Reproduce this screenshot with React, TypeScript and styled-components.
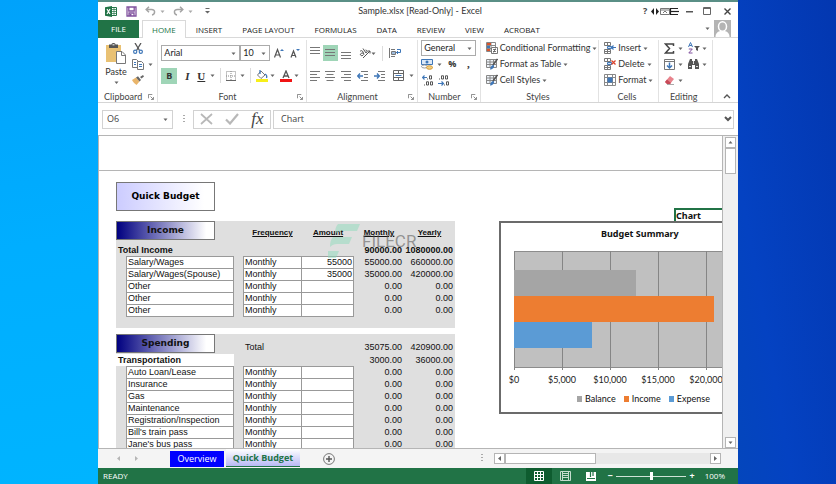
import React from "react";
import styled, { createGlobalStyle } from "styled-components";

const GREEN = "#217346";
const UI = '"Open Sans", "Noto Sans", sans-serif';
const RIBBON = 'Lato, "Open Sans", sans-serif';
const SHEET = '"Liberation Sans", Arial, sans-serif';

const GlobalStyle = createGlobalStyle`
  * { box-sizing: border-box; }
  body { margin: 0; overflow: hidden; }
  button, input, select { font: inherit; color: inherit; margin: 0; padding: 0; border: 0; border-radius: 0; background: none; }
  svg { display: block; flex: none; }
`;

/* ---------- desktop and window ---------- */

const Desktop = styled.div`
  display: grid;
  grid-template-columns: minmax(0, 98fr) minmax(0, 640fr) minmax(0, 98fr);
  height: 100vh;
  font: 9px/12px ${UI};
  color: #444;
`;
const Backdrop = styled.div<{ $side: "left" | "right" }>`
  background: ${(p) =>
    p.$side === "left"
      ? "linear-gradient(170deg, #00a2fb 0%, #00aeff 50%, #00b4ff 100%)"
      : "linear-gradient(80deg, #0446bc 0%, #0442c2 30%, #0337b0 100%)"};
`;
const Window = styled.main`
  display: flex;
  flex-direction: column;
  min-height: 0;
  min-width: 0;
  background: #fff;
  border-top: 2px solid #5a8f86;
`;
const Spacer = styled.div`
  flex: 1;
`;

const TitleBar = styled.header`
  display: flex;
  align-items: center;
  height: 18px;
  padding: 0 3px 0 7px;
`;
const TitleSide = styled.div<{ $end?: boolean }>`
  display: flex;
  align-items: center;
  flex: 1;
  gap: ${(p) => (p.$end ? 4 : 8)}px;
  justify-content: ${(p) => (p.$end ? "flex-end" : "flex-start")};
`;
const WindowTitle = styled.h1`
  margin: 0;
  font: 9px/12px ${RIBBON};
  color: #333;
`;
const IconButton = styled.button<{ $w?: number; $h?: number; $on?: boolean }>`
  display: flex;
  align-items: center;
  justify-content: center;
  flex: none;
  width: ${(p) => p.$w ?? 12}px;
  height: ${(p) => p.$h ?? 16}px;
  background: ${(p) => (p.$on ? "#9fd5b7" : "transparent")};
`;

/* ---------- ribbon tabs ---------- */

const TabStrip = styled.nav`
  display: flex;
  height: 18px;
  border-bottom: 1px solid #d9d9d9;
  font-size: 8px;
`;
const FileTab = styled.button`
  flex: none;
  width: 41px;
  height: 18px;
  margin-right: 3px;
  background: ${GREEN};
  color: #fff;
`;
const RibbonTab = styled.button<{ $active?: boolean }>`
  height: 18px;
  padding: 0 9px;
  white-space: nowrap;
  color: ${(p) => (p.$active ? GREEN : "#222")};
  background: ${(p) => (p.$active ? "#fff" : "transparent")};
  border: 1px solid ${(p) => (p.$active ? "#d9d9d9" : "transparent")};
  border-bottom: 0;
`;
const Account = styled.button`
  display: flex;
  align-items: center;
  gap: 4px;
  margin-right: 7px;
`;

/* ---------- ribbon ---------- */

const Ribbon = styled.section`
  display: flex;
  height: 65px;
  padding-top: 2px;
  border-bottom: 1px solid #d5d5d5;
  font-family: ${RIBBON};
  color: #333;
`;
const Group = styled.div<{ $w: number }>`
  display: flex;
  flex-direction: column;
  flex: ${(p) => p.$w} 1 0;
  min-width: 0;
  border-right: 1px solid #e2e2e2;
`;
const GroupBody = styled.div<{ $pad?: string }>`
  display: flex;
  flex-direction: column;
  flex: 1;
  padding: ${(p) => p.$pad ?? "0 0 0 5px"};
`;
const GroupFoot = styled.div`
  display: flex;
  align-items: center;
  height: 12px;
  padding: 2px 3px 0 0;
  color: #444;
`;
const GroupName = styled.span`
  flex: 1;
  text-align: center;
`;
const CollapseCorner = styled.div`
  display: flex;
  align-items: flex-end;
  justify-content: center;
  width: 25px;
  padding: 0 0 2px 4px;
`;
const Tools = styled.div<{ $gap?: number }>`
  display: flex;
  align-items: center;
  gap: ${(p) => p.$gap ?? 4}px;
  height: 16px;
`;
const ToolColumns = styled.div`
  display: flex;
  gap: 3px;
`;
const ToolColumn = styled.div`
  display: flex;
  flex-direction: column;
`;
const PasteButton = styled.button`
  display: flex;
  flex-direction: column;
  align-items: center;
  gap: 2px;
  width: 26px;
  padding-top: 3px;
`;
const Divider = styled.span`
  width: 1px;
  height: 15px;
  background: #dcdcdc;
`;
const TextTool = styled.button`
  display: flex;
  align-items: center;
  gap: 2px;
  height: 16px;
  white-space: nowrap;
`;
const SelectBox = styled.label<{ $w: number }>`
  position: relative;
  display: flex;
  flex: none;
  width: ${(p) => p.$w}px;
  height: 16px;
  border: 1px solid #ababab;
  select {
    appearance: none;
    width: 100%;
    padding-left: 2px;
    color: #222;
  }
  svg {
    position: absolute;
    right: 3px;
    top: 5px;
    pointer-events: none;
  }
`;
const Glyph = styled.span<{ $bold?: boolean; $italic?: boolean; $line?: boolean; $size?: number }>`
  font-family: "Liberation Serif", serif;
  font-size: ${(p) => p.$size ?? 11}px;
  font-weight: ${(p) => (p.$bold ? 700 : 400)};
  font-style: ${(p) => (p.$italic ? "italic" : "normal")};
  text-decoration: ${(p) => (p.$line ? "underline" : "none")};
`;
const Letter = styled.span`
  font-family: ${UI};
  font-size: 9px;
  font-weight: 700;
`;

/* ---------- formula bar ---------- */

const FormulaBar = styled.section`
  display: flex;
  align-items: center;
  height: 33px;
  padding: 0 4px;
  border-bottom: 1px solid #b5b5b5;
`;
const NameBox = styled.label`
  display: flex;
  align-items: center;
  width: 71px;
  height: 19px;
  padding: 0 4px;
  border: 1px solid #d2d2d2;
  input {
    flex: 1;
    min-width: 0;
  }
`;
const FormulaTools = styled.div`
  display: flex;
  align-items: center;
  justify-content: space-around;
  width: 78px;
  height: 19px;
  margin: 0 2px 0 8px;
  border: 1px solid #d2d2d2;
`;
const FormulaField = styled.label`
  display: flex;
  align-items: center;
  flex: 1;
  height: 19px;
  padding: 0 1px 0 7px;
  border: 1px solid #d2d2d2;
  input {
    flex: 1;
    min-width: 0;
  }
`;
const Grip = styled.span`
  width: 2px;
  height: 9px;
  margin-left: 10px;
  background: repeating-linear-gradient(#aaa 0 1px, transparent 1px 3px);
`;

/* ---------- sheet ---------- */

const Workspace = styled.section`
  display: flex;
  flex: 1;
  min-height: 0;
`;
const Grid = styled.div`
  flex: 1;
  min-width: 0;
  overflow: hidden;
  border-left: 1px solid #b5b5b5;
  border-right: 1px solid #b5b5b5;
  font: 9px/11px ${SHEET};
  color: #111;
`;
const FrozenPane = styled.div`
  height: 35px;
  border-bottom: 1px solid #b5b5b5;
`;
const SheetBody = styled.div`
  display: flex;
  gap: 44px;
  padding: 11px 0 0 17px;
`;
const BudgetSide = styled.div`
  position: relative;
  flex: none;
  width: 339px;
`;
const SheetTitle = styled.h2`
  width: 99px;
  height: 29px;
  margin: 0 0 10px;
  border: 1px solid #777;
  background: linear-gradient(90deg, #ccccff, #fff 90%);
  font: 700 9px/27px "DejaVu Sans", sans-serif;
  color: #000;
  text-align: center;
`;
const SectionTitle = styled.div`
  width: 99px;
  height: 19px;
  border: 1px solid #777;
  background: linear-gradient(90deg, #000080, #fff 92%);
  font: 700 9px/17px "DejaVu Sans", sans-serif;
  color: #111;
  text-align: center;
`;
const Budget = styled.table`
  width: 339px;
  margin-bottom: 6px;
  border-collapse: separate;
  border-spacing: 0;
  table-layout: fixed;
  background: #dfdfdf;
  td, th { padding: 0; height: 12px; white-space: nowrap; text-align: left; }
`;
const HeadRow = styled.tr<{ $h: number }>`
  height: ${(p) => p.$h}px;
  && > * {
    height: ${(p) => p.$h}px;
    vertical-align: top;
  }
`;
const HeadCell = styled.th`
  && {
    padding-top: 6px;
    font-size: 8px;
    text-align: center;
    text-decoration: underline;
  }
`;
const TotalCell = styled.td`
  && {
    padding: 8px 2px 0 2px;
    text-align: right;
  }
  &&:nth-of-type(2) { text-align: left; }
`;
const LabelCell = styled.th<{ $white?: boolean }>`
  && { padding-left: 2px; }
  background: ${(p) => (p.$white ? "#fff" : "transparent")};
`;
const Entry = styled.td<{ $right?: boolean; $first?: boolean }>`
  && {
    padding: 0 2px 0 1px;
    text-align: ${(p) => (p.$right ? "right" : "left")};
  }
  background: #fff;
  box-shadow: inset 0 1px #999, inset -1px 0 #999, 0 1px #999;
  border-left: ${(p) => (p.$first ? "1px solid #999" : "0")};
`;
const Num = styled.td<{ $bold?: boolean }>`
  && {
    padding-right: 2px;
    text-align: right;
  }
  font-weight: ${(p) => (p.$bold ? 700 : 400)};
`;
const Watermark = styled.div`
  position: absolute;
  left: 212px;
  top: 42px;
  display: flex;
  align-items: center;
  gap: 2px;
  font: 400 17px/34px Roboto, sans-serif;
  color: rgba(80, 80, 80, 0.55);
  pointer-events: none;
`;
const ChartSide = styled.div`
  display: flex;
  flex-direction: column;
  flex: 1;
  min-width: 0;
  padding-top: 26px;
`;
const ActiveCell = styled.div`
  align-self: flex-end;
  width: 48px;
  height: 13px;
  border: solid ${GREEN};
  border-width: 2px 0 0 2px;
  font: 700 9px/12px "Noto Sans", sans-serif;
`;
const ChartFrame = styled.figure`
  height: 193px;
  margin: 0;
  border: 2px solid #6b6b6b;
  border-right: 0;
  overflow: hidden;
  font: 9px/12px ${RIBBON};
`;
const ChartTitle = styled.figcaption`
  padding: 4px 0 5px 100px;
  font: 700 9px/14px "Noto Sans", sans-serif;
`;
const Legend = styled.div`
  display: flex;
  gap: 8px;
  padding: 5px 0 0 76px;
`;
const LegendItem = styled.span<{ $c: string }>`
  display: flex;
  align-items: center;
  gap: 3px;
  &::before {
    content: "";
    width: 5px;
    height: 6px;
    background: ${(p) => p.$c};
  }
`;

/* ---------- scroll bars, sheet tabs, status ---------- */

const VScroll = styled.div`
  display: flex;
  flex-direction: column;
  width: 15px;
  padding: 1px 2px 0;
  background: #f0f0f0;
`;
const ScrollButton = styled.button`
  display: flex;
  align-items: center;
  justify-content: center;
  flex: none;
  width: 11px;
  height: 11px;
  border: 1px solid #b5b5b5;
  background: #fff;
`;
const Thumb = styled.div<{ $w: number; $h: number }>`
  flex: none;
  width: ${(p) => p.$w}px;
  height: ${(p) => p.$h}px;
  border: 1px solid #b5b5b5;
  background: #fff;
`;
const SheetTabs = styled.nav`
  display: flex;
  align-items: center;
  height: 20px;
  padding-right: 17px;
  border-top: 1px solid #b5b5b5;
  background: #f4f4f4;
`;
const SheetNav = styled.div`
  display: flex;
  gap: 13px;
  width: 72px;
  padding-left: 18px;
`;
const SheetTab = styled.button<{ $active?: boolean }>`
  width: ${(p) => (p.$active ? 74 : 54)}px;
  height: ${(p) => (p.$active ? 18 : 16)}px;
  margin-right: 2px;
  align-self: ${(p) => (p.$active ? "flex-start" : "center")};
  border-bottom: ${(p) => (p.$active ? `1px solid ${GREEN}` : "0")};
  background: ${(p) => (p.$active ? "linear-gradient(#fff, #b9b9f5)" : "#0000ff")};
  color: ${(p) => (p.$active ? GREEN : "#fff")};
  font-weight: ${(p) => (p.$active ? 700 : 400)};
  white-space: nowrap;
`;
const HScroll = styled.div`
  display: flex;
  width: 227px;
  margin-left: 11px;
  background: #e8e8e8;
`;
const StatusBar = styled.footer`
  display: flex;
  align-items: center;
  height: 16px;
  padding: 0 13px 0 5px;
  background: ${GREEN};
  color: #fff;
  font-size: 8px;
`;
const ViewButton = styled.button<{ $active?: boolean }>`
  display: flex;
  align-items: center;
  justify-content: center;
  width: 26px;
  height: 16px;
  background: ${(p) => (p.$active ? "#0e5c2f" : "transparent")};
`;
const ZoomSlider = styled.input`
  appearance: none;
  width: 70px;
  height: 10px;
  && { background: linear-gradient(#cfe3d6, #cfe3d6) center / 100% 1px no-repeat; }
  &::-webkit-slider-thumb {
    appearance: none;
    width: 3px;
    height: 8px;
    background: #fff;
  }
`;
const ZoomValue = styled.span`
  width: 27px;
  text-align: right;
`;

/* ---------- icons ---------- */

type Dir = "down" | "up" | "left" | "right";
const TRI: Record<Dir, string> = {
  down: "M.5 1.500h4L2.500 4z",
  up: "M.5 3.500h4L2.500 1z",
  left: "M4 0v5L1 2.500z",
  right: "M1 0v5l3-2.500z",
};
const Caret = ({ dir = "down", color = "#666" }: { dir?: Dir; color?: string }) => (
  <svg width="5" height="5" viewBox="0 0 5 5"><path d={TRI[dir]} fill={color} /></svg>
);
const Launcher = () => (
  <svg width="6" height="6" viewBox="0 0 7 7" fill="none" stroke="#777">
    <path d="M.5 5V.5H5M3 3l3 3M6.500 3.500v3h-3" />
  </svg>
);
const ExcelLogo = () => (
  <svg width="12" height="11" viewBox="0 0 12 11">
    <path d="M6 1.500h5.500v8H6" fill="#fff" stroke={GREEN} />
    <path d="M7 3.500h4M7 5.500h4M7 7.500h4M9 2v7" stroke={GREEN} strokeWidth=".7" />
    <path d="M0 1.200 7 0v11L0 9.800z" fill={GREEN} />
    <path d="m2 3 3 5M5 3 2 8" stroke="#fff" strokeWidth="1.200" />
  </svg>
);
const SaveIcon = () => (
  <svg width="11" height="11" viewBox="0 0 11 11" fill="none" stroke="#80519e" strokeWidth="1.300">
    <path d="M1 1h9v9H1zM2.800 1v4h5.400V1M3 10V7h5v3" />
    <path d="M3.500 8h2v2h-2z" fill="#80519e" stroke="none" />
  </svg>
);
const UndoIcon = ({ redo }: { redo?: boolean }) => (
  <svg width="11" height="10" viewBox="0 0 11 10" fill="none" stroke="#a4a4a4" strokeWidth="1.500">
    {redo ? <path d="M7 .8 9.800 3.500 7 6.200M9.500 3.500H4.500C0 3.500 1 8.500 4 9" /> : <path d="M4 .8 1.200 3.500 4 6.200M1.500 3.500h5C11 3.500 10 8.500 7 9" />}
  </svg>
);
const QatMore = () => (
  <svg width="5" height="6" viewBox="0 0 5 6"><path d="M.5 0h4v1h-4zM0 3h5L2.500 5.500z" fill="#666" /></svg>
);
const RibbonDisplay = () => (
  <svg width="28" height="9" viewBox="0 0 28 9" fill="none" stroke="#333">
    <path d="M3 1v7L0 4.500zM5 1v7l3-3.500z" fill="#222" stroke="none" />
    <path d="M9.500 1.500h9v6h-9zM9.500 3h9M12 6l2-2 2 2" stroke="#777" />
    <path d="M27 1.500h-8M19.500 1v7M27 7.500h-8" stroke="#222" strokeWidth="1.200" />
    <path d="M20 4.500h8" stroke="#222" strokeWidth="1.200" />
  </svg>
);
const MinIcon = () => <svg width="7" height="8" viewBox="0 0 7 8"><path d="M0 4h7v1.500H0z" fill="#555" /></svg>;
const MaxIcon = () => (
  <svg width="8" height="8" viewBox="0 0 8 8" fill="none" stroke="#666"><path d="M.5.500h7v7h-7zM.5 1.500h7" /></svg>
);
const CloseIcon = () => (
  <svg width="7" height="7" viewBox="0 0 7 7" stroke="#444" strokeWidth="1.400"><path d="m.5.500 6 6M6.500.500l-6 6" /></svg>
);
const Avatar = () => (
  <svg width="17" height="17" viewBox="0 0 17 17">
    <path d="M0 0h17v17H0z" fill="#b4b4b4" />
    <path d="M1.500 17c0-4 2.500-5.500 5-6h4c2.500.5 5 2 5 6z" fill="#fff" />
    <ellipse cx="8.500" cy="6.500" rx="4" ry="4.800" fill="#b4b4b4" stroke="#fff" strokeWidth="1.500" />
  </svg>
);
const PasteIcon = () => (
  <svg width="20" height="21" viewBox="0 0 20 21">
    <path d="M0 2h15v17H0z" fill="#e9c173" />
    <path d="M3 1.500h2.500c0-2 4-2 4 0H12V5H3z" fill="#555" />
    <path d="M6.500 1.800h2" stroke="#fff" />
    <path d="M10.500 8.500h5.500l3.500 3.500v8.500h-9z" fill="#fff" stroke="#777" />
    <path d="M15.500 8.500v4h4" fill="none" stroke="#777" />
  </svg>
);
const CutIcon = () => (
  <svg width="10" height="11" viewBox="0 0 10 11" fill="none">
    <path d="m2 0 4.500 7.500M8 0 3.500 7.500" stroke="#555" strokeWidth="1.300" />
    <circle cx="2.200" cy="8.700" r="1.600" stroke="#3f77b8" strokeWidth="1.200" />
    <circle cx="7.800" cy="8.700" r="1.600" stroke="#3f77b8" strokeWidth="1.200" />
  </svg>
);
const CopyIcon = () => (
  <svg width="12" height="11" viewBox="0 0 12 11" fill="#fff" stroke="#777">
    <path d="M.5.500h4l2 2v6h-6z" />
    <path d="M5.500 2.500h4l2 2v6h-6z" />
    <path d="M2 3.500h2M2 5.500h2M7 5.500h3M7 7.500h3" stroke="#3f77b8" />
  </svg>
);
const BrushIcon = () => (
  <svg width="12" height="10" viewBox="0 0 12 10">
    <path d="m0 5 4-2.500 3.500 4L4.500 10C3 9 1 7 0 5z" fill="#e9b56b" />
    <path d="m4 2.500 2-1.300L9 5 7.500 6.500zM8 2l3-2 1 1.500-2.500 2z" fill="#666" />
  </svg>
);
const GrowFont = ({ shrink }: { shrink?: boolean }) => (
  <svg width="10" height="10" viewBox="0 0 10 10" fill="none">
    <path d={shrink ? "M1 9.500 3.500 3 6 9.500M2 7.500h3" : "M.5 9.500 3.500 1.500l3 8M1.500 7h4"} stroke="#555" strokeWidth="1.200" />
    <path d={shrink ? "M6 1h4L8 3z" : "M6 3h4L8 1z"} fill="#3f77b8" />
  </svg>
);
const BordersIcon = () => (
  <svg width="10" height="10" viewBox="0 0 10 10" fill="none" stroke="#888">
    <path d="M.5.500h9v9h-9zM5 0v10M0 5h10" strokeDasharray="1 1" />
    <path d="M0 9.500h10" stroke="#666" />
  </svg>
);
const FillIcon = () => (
  <svg width="12" height="12" viewBox="0 0 12 12">
    <path d="m5 1 4 4-4 3.500L1.500 5z" fill="#fff" stroke="#777" />
    <path d="M4 0v4M9 4c2 1 2 3 1.500 4" stroke="#3f77b8" strokeWidth="1.300" fill="none" />
    <path d="M0 9h12v3H0z" fill="#f7ef1a" />
  </svg>
);
const FontColorIcon = () => (
  <svg width="12" height="12" viewBox="0 0 12 12">
    <path d="M3 8 6 1l3 7M4 6h4" stroke="#555" strokeWidth="1.300" fill="none" />
    <path d="M0 9h12v3H0z" fill="#f01414" />
  </svg>
);
const LinesIcon = ({ rows, short = "center" }: { rows: number[]; short?: "left" | "center" | "right" | "none" }) => {
  const x = { left: 0, center: 1.5, right: 3, none: 0 }[short];
  const len = short === "none" ? 10 : 7;
  return (
    <svg width="10" height="12" viewBox="0 0 10 12" stroke="#777">
      {rows.map((y, i) => (i % 2 ? <path key={y} d={`M${x} ${y}.500h${len}`} /> : <path key={y} d={`M0 ${y}.500h10`} />))}
    </svg>
  );
};
const OrientIcon = () => (
  <svg width="12" height="11" viewBox="0 0 12 11" fill="none" stroke="#555">
    <path d="M4 10 11 3M11 5.500V3H8.500" />
    <path d="M1 3.500c1-1.500 2.500-1 3 .5l1 2.500M4 5c-2 0-3 1-2.500 2S4 8 4.500 6.500M4 .500l3 4.500c1.500-.5 1.500-3-.5-3" />
  </svg>
);
const IndentIcon = ({ out }: { out?: boolean }) => (
  <svg width="11" height="10" viewBox="0 0 11 10" fill="none">
    <path d="M4 .5h7M7 3.500h4M7 6.500h4M4 9.500h7" stroke="#777" />
    <path d={out ? "M6 5H1M3 2.500.7 5 3 7.500" : "M0 5h5M3 2.500 5.300 5 3 7.500"} stroke="#3f77b8" strokeWidth="1.400" />
  </svg>
);
const WrapIcon = () => (
  <svg width="12" height="12" viewBox="0 0 12 12" fill="none" stroke="#777">
    <path d="M.5 1v10M2 2.500h4M2 9.500h4M2.500 4.500h4v3h-4z" />
    <path d="M8 2.500h3.500v3H7M9 4 7.500 5.500 9 7M3 6h3" stroke="#3f77b8" />
  </svg>
);
const MergeIcon = () => (
  <svg width="11" height="11" viewBox="0 0 11 11" fill="none" stroke="#666">
    <path d="M.5.500h10v10H.5zM.5 3.500h10M.5 7.500h10M5.500 0v3M5.500 8v3" />
    <path d="M2.500 5.500h6" stroke="#3f77b8" />
  </svg>
);
const CurrencyIcon = () => (
  <svg width="12" height="11" viewBox="0 0 12 11">
    <path d="M.5.500h11v5H.5z" fill="#dce8f6" stroke="#3f77b8" />
    <circle cx="6" cy="3" r="1.500" fill="#3f77b8" />
    <ellipse cx="3.500" cy="7.500" rx="3" ry="1.500" fill="#fff" stroke="#999" />
    <ellipse cx="8.500" cy="8.500" rx="3" ry="1.800" fill="#f1cf83" stroke="#d79b35" />
  </svg>
);
const DecimalIcon = ({ less }: { less?: boolean }) => (
  <svg width="11" height="11" viewBox="0 0 11 11" fill="none" stroke="#444" strokeWidth=".9">
    <path d={less ? "M3.500.800h2v3.200h-2zM7.500.800h2v3.200h-2zM8.500 6.800h2V10h-2z" : "M7.500.800h2v3.200h-2zM4.500 6.800h2V10h-2zM8.500 6.800h2V10h-2z"} />
    <path d={less ? "M1.500 3.500v1M6.500 9.500v1" : "M5.500 3.500v1M2.500 9.500v1"} />
    <path d={less ? "M0 8.500h5M3.500 6.500l2 2-2 2" : "M5 2.500H1M2.500.500l-2 2 2 2"} stroke="#3f77b8" strokeWidth="1.200" />
  </svg>
);
const CondIcon = () => (
  <svg width="12" height="12" viewBox="0 0 12 12">
    <path d="M.5.500h9v9h-9zM.5 3.500h9M.5 6.500h9M5 0v9" fill="#fff" stroke="#888" />
    <path d="M1 1h4v2H1zM1 7h3v2H1z" fill="#d9532c" /><path d="M1 4h3v2H1z" fill="#3f77b8" />
    <path d="M5.500 5.500h6v6h-6z" fill="#fff" stroke="#777" /><path d="M7 7.500h3M7 9.500h3M9.500 6.500l-2 4" stroke="#555" strokeWidth=".8" />
  </svg>
);
const StyleIcon = () => (
  <svg width="12" height="12" viewBox="0 0 12 12">
    <path d="M.5 1.500h10v8H.5zM.5 4h10M.5 6.500h10M4 1.500v8M7.500 1.500v8" fill="#eef3f9" stroke="#888" />
    <path d="M11.500 1 7 7" stroke="#555" strokeWidth="1.500" />
    <path d="M4 11.500c.5-3 1.500-4.500 3.500-4.500 1.500 2-.5 4.500-3.500 4.500z" fill="#3f77b8" />
  </svg>
);
const CellsIcon = ({ kind }: { kind: "insert" | "delete" | "format" }) => (
  <svg width="12" height="12" viewBox="0 0 12 12" fill="none">
    {kind === "format" ? (
      <>
        <path d="M.5.500h11v11H.5zM.5 3.500h11M.5 8.500h11M3.500 0v12M8.500 0v12" stroke="#888" />
        <path d="M3.500 3.500h5v5h-5z" fill="#3f77b8" />
      </>
    ) : (
      <>
        <path d="M.5.500h6v3h-6zM3.500 0v4M.5 7.500h6v4h-6zM3.500 7.500v4M.5 9.500h6" stroke="#777" />
        <path d="M3.500 4.500h4v2h-4z" fill="#cfe0f3" stroke="#3f77b8" />
        {kind === "insert"
          ? <path d="M12 5.500H8M9.500 3.500l-2 2 2 2" stroke="#3f77b8" strokeWidth="1.200" />
          : <path d="m7.500 2.500 4 4M11.500 2.500l-4 4" stroke="#d9432c" strokeWidth="1.300" />}
      </>
    )}
  </svg>
);
const SigmaIcon = () => (
  <svg width="11" height="11" viewBox="0 0 11 11" fill="none" stroke="#444" strokeWidth="1.500"><path d="M9.500 3V1H1.500l4 4.500-4 4.500h8V8" /></svg>
);
const SortIcon = () => (
  <svg width="12" height="12" viewBox="0 0 12 12" fill="none">
    <path d="M.5 5 2.500.500 4.500 5M1.200 3.500h2.600" stroke="#3f77b8" />
    <path d="M.8 7h3.500L.8 11h3.700" stroke="#80519e" />
    <path d="M6 4h6L10 6v3L8 8V6z" fill="#555" />
  </svg>
);
const FillDownIcon = () => (
  <svg width="11" height="11" viewBox="0 0 11 11" fill="none">
    <path d="M.5.500h10v10H.5zM.5 2.500h10" stroke="#777" />
    <path d="M5.500 3.500V9M3 6.500 5.500 9 8 6.500" stroke="#3f77b8" strokeWidth="1.500" />
  </svg>
);
const FindIcon = () => (
  <svg width="11" height="10" viewBox="0 0 11 10"><path d="M2 0h2v2h3V0h2l2 5v5H7V6H4v4H0V5z" fill="#555" /><path d="M1 7.500h2M8 7.500h2M5.500 2v3" stroke="#fff" strokeWidth=".8" /></svg>
);
const EraserIcon = () => (
  <svg width="11" height="9" viewBox="0 0 11 9"><path d="m1 6 5-6 4 3-4 5H3z" fill="#e8838c" /><path d="m1 6 2-2.500L7 7l-1 1H3z" fill="#c74a58" /><path d="M3 8.500h7" stroke="#aaa" /></svg>
);
const Chevron = ({ up }: { up?: boolean }) => (
  <svg width="8" height="6" viewBox="0 0 8 6" fill="none" stroke="#555" strokeWidth={up ? 1.4 : 2}><path d={up ? "m1 5 3-3 3 3" : "m1 1 3 3 3-3"} /></svg>
);
const CancelIcon = () => (
  <svg width="13" height="12" viewBox="0 0 13 12" stroke="#b8b8b8" strokeWidth="1.700"><path d="m1 1 11 10M12 1 1 11" /></svg>
);
const CheckIcon = () => (
  <svg width="14" height="12" viewBox="0 0 14 12" fill="none" stroke="#b8b8b8" strokeWidth="2.200"><path d="m1 6.500 4 4L13 1" /></svg>
);
const AddSheetIcon = () => (
  <svg width="12" height="12" viewBox="0 0 12 12" fill="none" stroke="#777"><circle cx="6" cy="6" r="5.400" /><path d="M3 6h6M6 3v6" stroke="#555" strokeWidth="1.400" /></svg>
);
const NormalView = () => (
  <svg width="10" height="10" viewBox="0 0 10 10" fill="none" stroke="#fff"><path d="M.5.500h9v9h-9zM.5 3.500h9M.5 6.500h9M3.500.500v9M6.500.500v9" /></svg>
);
const PageView = () => (
  <svg width="11" height="10" viewBox="0 0 11 10" fill="none" stroke="#c4dccd"><path d="M.5.500h10v9H.5zM2.500 0v10M8.500 0v10M3 2.500h5M3 4.500h5M3 6.500h5" /></svg>
);
const BreakView = () => (
  <svg width="10" height="9" viewBox="0 0 10 9"><path d="M0 0h10v9H0z" fill="#fff" /><path d="M1 6.500h8M4.500 0v5M7 4V0" stroke={GREEN} strokeWidth="1.200" /></svg>
);
const WatermarkLogo = () => (
  <svg width="32" height="34" viewBox="0 0 32 34" fill="#8fdcbc" opacity=".5">
    <path d="M10 0h22l-3 7H14c-3 0-5 1-7 3 0-5 1-8 3-10zM5 13h19l-3 7H9c-3 0-5 1-7 3 0-5 1-8 3-10zM0 27h11l-3 7H0z" />
  </svg>
);

/* ---------- data ---------- */

type Row = { name: string; amount?: string; monthly: string; yearly: string };
const zero = (name: string): Row => ({ name, monthly: "0.00", yearly: "0.00" });
const INCOME: Row[] = [
  { name: "Salary/Wages", amount: "55000", monthly: "55000.00", yearly: "660000.00" },
  { name: "Salary/Wages(Spouse)", amount: "35000", monthly: "35000.00", yearly: "420000.00" },
  zero("Other"), zero("Other"), zero("Other"),
];
const SPENDING: Row[] = ["Auto Loan/Lease", "Insurance", "Gas", "Maintenance", "Registration/Inspection", "Bill's train pass", "Jane's bus pass"].map(zero);
const TABS = ["HOME", "INSERT", "PAGE LAYOUT", "FORMULAS", "DATA", "REVIEW", "VIEW", "ACROBAT"];
const BARS = [
  { name: "Balance", width: 122, y: 19, color: "#a5a5a5" },
  { name: "Income", width: 200, y: 45, color: "#ed7d31" },
  { name: "Expense", width: 78, y: 71, color: "#5b9bd5" },
];
const AXIS = ["$0", "$5,000", "$10,000", "$15,000", "$20,000"];

const Columns = () => (
  <colgroup>
    {[10, 108, 9, 59, 52, 50, 51].map((w, i) => <col key={i} width={w} />)}
  </colgroup>
);
const EntryRow = ({ row }: { row: Row }) => (
  <tr>
    <td />
    <Entry $first>{row.name}</Entry>
    <td />
    <Entry $first>Monthly</Entry>
    <Entry $right>{row.amount ?? ""}</Entry>
    <Num>{row.monthly}</Num>
    <Num>{row.yearly}</Num>
  </tr>
);

const Plot = () => (
  <svg width="222" height="142" viewBox="0 0 222 142">
    <path d="M13 5h209v116H13z" fill="#c0c0c0" />
    <path d="M13 5.500h209M13 121.500h209" stroke="#8c8c8c" />
    {AXIS.map((label, i) => (
      <path key={label} d={`M${13 + i * 48}.500 5v119`} stroke="#858585" />
    ))}
    {BARS.map((b) => <rect key={b.name} x="13" y={b.y + 5} width={b.width} height="26" fill={b.color} />)}
    {AXIS.map((label, i) => (
      <text key={label} x={13 + i * 48} y="137" fontSize="9" textAnchor="middle" fill="#222">{label}</text>
    ))}
  </svg>
);

const Tool = ({ label, children, ...rest }: { label: string; children: React.ReactNode; $w?: number; $h?: number; $on?: boolean }) => (
  <IconButton type="button" aria-label={label} {...rest}>{children}</IconButton>
);

const Foot = ({ name, launcher }: { name: string; launcher?: boolean }) => (
  <GroupFoot>
    <GroupName>{name}</GroupName>
    {launcher && <Launcher />}
  </GroupFoot>
);

export default function App() {
  return (
    <Desktop>
      <GlobalStyle />
      <Backdrop $side="left" />
      <Window>
        <TitleBar>
          <TitleSide>
            <ExcelLogo />
            <Tool label="Save"><SaveIcon /></Tool>
            <Tool label="Undo" $w={20}><UndoIcon /><Spacer /><Caret color="#aaa" /></Tool>
            <Tool label="Redo" $w={20}><UndoIcon redo /><Spacer /><Caret color="#aaa" /></Tool>
            <Tool label="Customize Quick Access Toolbar"><QatMore /></Tool>
          </TitleSide>
          <WindowTitle>Sample.xlsx [Read-Only] - Excel</WindowTitle>
          <TitleSide $end>
            <Tool label="Help and ribbon display" $w={36}><Letter>?</Letter><Spacer /><RibbonDisplay /></Tool>
            <Tool label="Minimize"><MinIcon /></Tool>
            <Tool label="Maximize" $w={16}><MaxIcon /></Tool>
            <Tool label="Close" $w={16}><CloseIcon /></Tool>
          </TitleSide>
        </TitleBar>

        <TabStrip>
          <FileTab type="button">FILE</FileTab>
          {TABS.map((t, i) => <RibbonTab key={t} type="button" $active={i === 0}>{t}</RibbonTab>)}
          <Spacer />
          <Account type="button" aria-label="Account"><Caret /><Avatar /></Account>
        </TabStrip>

        <Ribbon>
          <Group $w={60}>
            <GroupBody>
              <ToolColumns>
                <PasteButton type="button"><PasteIcon />Paste<Caret /></PasteButton>
                <ToolColumn>
                  <Tool label="Cut"><CutIcon /></Tool>
                  <Tools><Tool label="Copy"><CopyIcon /></Tool><Caret /></Tools>
                  <Tool label="Format Painter"><BrushIcon /></Tool>
                </ToolColumn>
              </ToolColumns>
            </GroupBody>
            <Foot name="Clipboard" launcher />
          </Group>

          <Group $w={149}>
            <GroupBody $pad="5px 0 0 3px">
              <Tools $gap={0}>
                <SelectBox $w={79}><select aria-label="Font" defaultValue="Arial"><option>Arial</option></select><Caret /></SelectBox>
                <SelectBox $w={30}><select aria-label="Font size" defaultValue="10"><option>10</option></select><Caret /></SelectBox>
                <Tool label="Increase font size" $w={18}><GrowFont /></Tool>
                <Tool label="Decrease font size" $w={14}><GrowFont shrink /></Tool>
              </Tools>
              <Spacer />
              <Tools $gap={5}>
                <Tool label="Bold" $w={16} $on><Letter>B</Letter></Tool>
                <Tool label="Italic" $w={10}><Glyph $italic $bold>I</Glyph></Tool>
                <Tool label="Underline" $w={18}><Glyph $line $bold>U</Glyph><Spacer /><Caret /></Tool>
                <Divider />
                <Tool label="Borders" $w={19}><BordersIcon /><Spacer /><Caret /></Tool>
                <Divider />
                <Tool label="Fill color" $w={19}><FillIcon /><Spacer /><Caret /></Tool>
                <Tool label="Font color" $w={19}><FontColorIcon /><Spacer /><Caret /></Tool>
              </Tools>
              <Spacer />
            </GroupBody>
            <Foot name="Font" launcher />
          </Group>

          <Group $w={112}>
            <GroupBody $pad="5px 0 0 2px">
              <Tools $gap={1}>
                <Tool label="Top align" $w={13}><LinesIcon rows={[0, 3, 6]} short="none" /></Tool>
                <Tool label="Middle align" $w={15} $on><LinesIcon rows={[2, 5, 8]} short="none" /></Tool>
                <Tool label="Bottom align" $w={15}><LinesIcon rows={[5, 8, 11]} short="none" /></Tool>
                <Tool label="Orientation" $w={26}><OrientIcon /><Caret /></Tool>
                <Tool label="Wrap text" $w={26}><Divider /><Spacer /><WrapIcon /><Spacer /></Tool>
              </Tools>
              <Spacer />
              <Tools $gap={1}>
                <Tool label="Align left" $w={13}><LinesIcon rows={[1, 4, 7, 10]} short="left" /></Tool>
                <Tool label="Center" $w={15}><LinesIcon rows={[1, 4, 7, 10]} /></Tool>
                <Tool label="Align right" $w={15}><LinesIcon rows={[1, 4, 7, 10]} short="right" /></Tool>
                <Tool label="Decrease indent" $w={16}><IndentIcon out /></Tool>
                <Tool label="Increase indent" $w={15}><IndentIcon /></Tool>
                <Tool label="Merge" $w={26}><Spacer /><MergeIcon /><Spacer /><Caret /></Tool>
              </Tools>
              <Spacer />
            </GroupBody>
            <Foot name="Alignment" launcher />
          </Group>

          <Group $w={62}>
            <GroupBody $pad="0 0 0 3px">
              <SelectBox $w={55}><select aria-label="Number format" defaultValue="General"><option>General</option></select><Caret /></SelectBox>
              <Tools>
                <Tool label="Accounting format" $w={21}><CurrencyIcon /><Spacer /><Caret /></Tool>
                <Tool label="Percent"><Letter>%</Letter></Tool>
                <Tool label="Comma"><Glyph $bold>,</Glyph></Tool>
              </Tools>
              <Tools>
                <Tool label="Increase decimal"><DecimalIcon /></Tool>
                <Tool label="Decrease decimal"><DecimalIcon less /></Tool>
              </Tools>
            </GroupBody>
            <Foot name="Number" launcher />
          </Group>

          <Group $w={119}>
            <GroupBody>
              <TextTool type="button"><CondIcon />Conditional Formatting<Caret /></TextTool>
              <TextTool type="button"><StyleIcon />Format as Table<Caret /></TextTool>
              <TextTool type="button"><StyleIcon />Cell Styles<Caret /></TextTool>
            </GroupBody>
            <Foot name="Styles" />
          </Group>

          <Group $w={59}>
            <GroupBody>
              <TextTool type="button"><CellsIcon kind="insert" />Insert<Caret /></TextTool>
              <TextTool type="button"><CellsIcon kind="delete" />Delete<Caret /></TextTool>
              <TextTool type="button"><CellsIcon kind="format" />Format<Caret /></TextTool>
            </GroupBody>
            <Foot name="Cells" />
          </Group>

          <Group $w={54}>
            <GroupBody>
              <Tools $gap={5}>
                <Tool label="AutoSum" $w={19}><SigmaIcon /><Spacer /><Caret /></Tool>
                <Tool label="Sort and filter" $w={19}><SortIcon /><Spacer /><Caret /></Tool>
              </Tools>
              <Tools $gap={5}>
                <Tool label="Fill" $w={19}><FillDownIcon /><Spacer /><Caret /></Tool>
                <Tool label="Find" $w={19}><FindIcon /><Spacer /><Caret /></Tool>
              </Tools>
              <Tool label="Clear" $w={19}><EraserIcon /><Spacer /><Caret /></Tool>
            </GroupBody>
            <Foot name="Editing" />
          </Group>
          <CollapseCorner>
            <Tool label="Collapse the ribbon" $h={8}><Chevron up /></Tool>
          </CollapseCorner>
        </Ribbon>

        <FormulaBar>
          <NameBox><input aria-label="Name box" defaultValue="O6" /><Caret /></NameBox>
          <Grip />
          <FormulaTools>
            <Tool label="Cancel" $w={14}><CancelIcon /></Tool>
            <Tool label="Enter" $w={14}><CheckIcon /></Tool>
            <Tool label="Insert function" $w={14}><Glyph $italic $size={17}>fx</Glyph></Tool>
          </FormulaTools>
          <FormulaField><input aria-label="Formula" defaultValue="Chart" /><Chevron /></FormulaField>
        </FormulaBar>

        <Workspace>
          <Grid>
            <FrozenPane />
            <SheetBody>
              <BudgetSide>
                <SheetTitle>Quick Budget</SheetTitle>
                <Budget>
                  <Columns />
                  <thead>
                    <HeadRow $h={23}>
                      <td colSpan={3}><SectionTitle>Income</SectionTitle></td>
                      <HeadCell>Frequency</HeadCell>
                      <HeadCell>Amount</HeadCell>
                      <HeadCell>Monthly</HeadCell>
                      <HeadCell>Yearly</HeadCell>
                    </HeadRow>
                  </thead>
                  <tbody>
                    <tr>
                      <LabelCell colSpan={5}>Total Income</LabelCell>
                      <Num $bold>90000.00</Num>
                      <Num $bold>1080000.00</Num>
                    </tr>
                    {INCOME.map((r, i) => <EntryRow key={i} row={r} />)}
                    <tr><td colSpan={7} /></tr>
                  </tbody>
                </Budget>
                <Budget>
                  <Columns />
                  <thead>
                    <HeadRow $h={20}>
                      <td colSpan={3}><SectionTitle>Spending</SectionTitle></td>
                      <TotalCell colSpan={2}>Total</TotalCell>
                      <TotalCell>35075.00</TotalCell>
                      <TotalCell>420900.00</TotalCell>
                    </HeadRow>
                  </thead>
                  <tbody>
                    <tr>
                      <LabelCell colSpan={2} $white>Transportation</LabelCell>
                      <td colSpan={3} />
                      <Num>3000.00</Num>
                      <Num>36000.00</Num>
                    </tr>
                    {SPENDING.map((r) => <EntryRow key={r.name} row={r} />)}
                  </tbody>
                </Budget>
                <Watermark><WatermarkLogo />FILECR</Watermark>
              </BudgetSide>
              <ChartSide>
                <ActiveCell>Chart</ActiveCell>
                <ChartFrame>
                  <ChartTitle>Budget Summary</ChartTitle>
                  <Plot />
                  <Legend>{BARS.map((b) => <LegendItem key={b.name} $c={b.color}>{b.name}</LegendItem>)}</Legend>
                </ChartFrame>
              </ChartSide>
            </SheetBody>
          </Grid>
          <VScroll>
            <ScrollButton type="button" aria-label="Scroll up"><Caret dir="up" /></ScrollButton>
            <Thumb $w={11} $h={26} />
            <Spacer />
            <ScrollButton type="button" aria-label="Scroll down"><Caret /></ScrollButton>
          </VScroll>
        </Workspace>

        <SheetTabs>
          <SheetNav><Caret dir="left" color="#b5b5b5" /><Caret dir="right" color="#b5b5b5" /></SheetNav>
          <SheetTab type="button">Overview</SheetTab>
          <SheetTab type="button" $active>Quick Budget</SheetTab>
          <Tool label="New sheet" $w={54}><AddSheetIcon /></Tool>
          <Spacer />
          <Grip />
          <HScroll>
            <ScrollButton type="button" aria-label="Scroll left"><Caret dir="left" /></ScrollButton>
            <Thumb $w={91} $h={11} />
            <Spacer />
            <ScrollButton type="button" aria-label="Scroll right"><Caret dir="right" /></ScrollButton>
          </HScroll>
        </SheetTabs>

        <StatusBar>
          <span>READY</span>
          <Spacer />
          <ViewButton type="button" aria-label="Normal view" $active><NormalView /></ViewButton>
          <ViewButton type="button" aria-label="Page layout view"><PageView /></ViewButton>
          <ViewButton type="button" aria-label="Page break view"><BreakView /></ViewButton>
          <Tool label="Zoom out"><Letter>−</Letter></Tool>
          <ZoomSlider type="range" aria-label="Zoom" min={10} max={190} defaultValue={100} />
          <Tool label="Zoom in"><Letter>+</Letter></Tool>
          <ZoomValue>100%</ZoomValue>
        </StatusBar>
      </Window>
      <Backdrop $side="right" />
    </Desktop>
  );
}
